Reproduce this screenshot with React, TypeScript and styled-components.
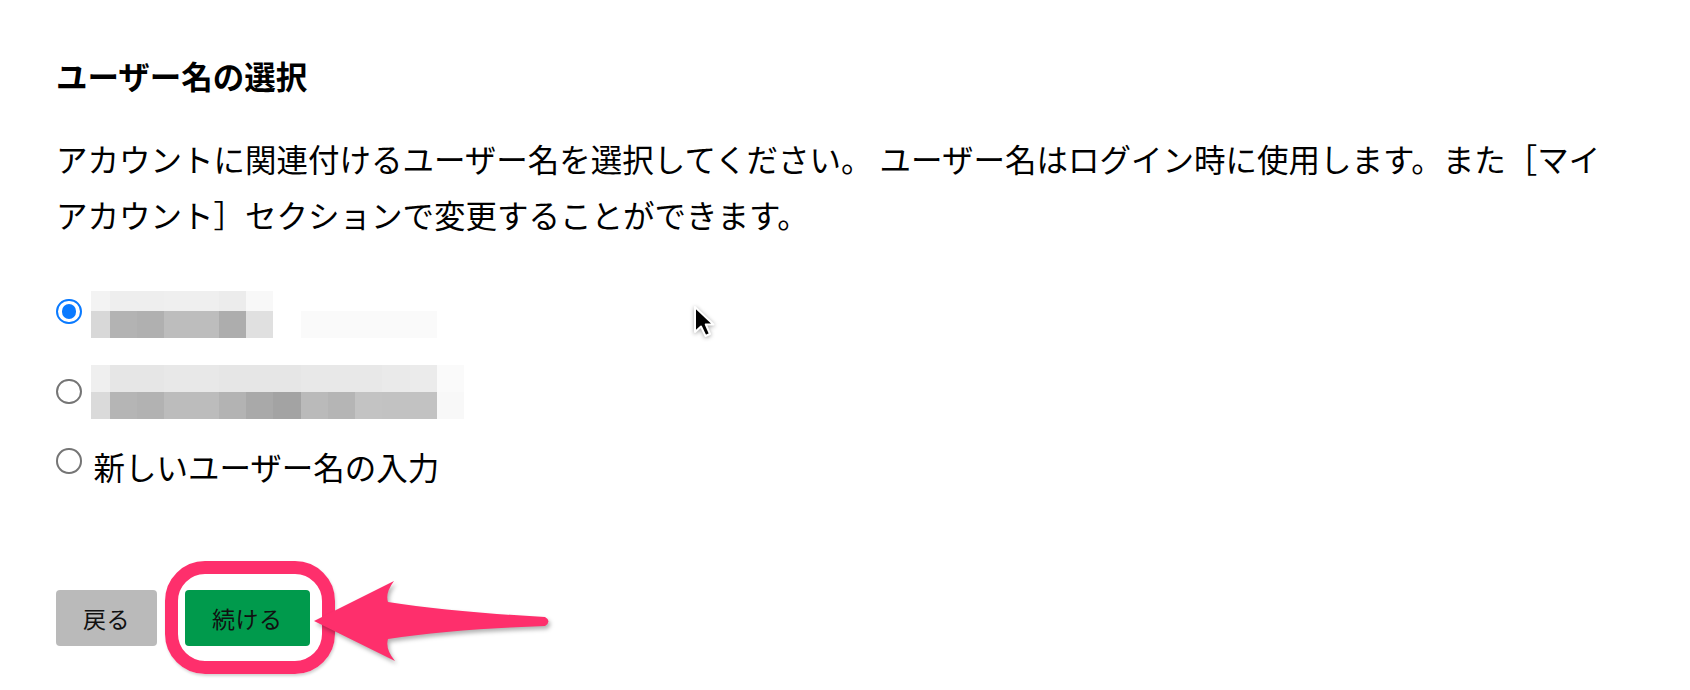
import { FC } from 'react';
import styled, { createGlobalStyle } from 'styled-components';

const GlobalStyle = createGlobalStyle`
  html, body {
    margin: 0;
    background: #fff;
  }
  body {
    font-family: 'Noto Sans CJK JP', 'Noto Sans', sans-serif;
    color: #000;
  }
`;

const FIRST = 19;
const CELL = 27.3;

const mosaicA: string[][] = [
  ['#f3f3f3', '#eeeeee', '#eeeeee', '#efefef', '#efefef', '#ececec', '#f8f8f8'],
  ['#d8d8d8', '#b3b3b3', '#b0b0b0', '#bdbdbd', '#bdbdbd', '#adadad', '#e0e0e0', '#fff', '#fafafa', '#fafafa', '#fafafa', '#fafafa', '#fafafa'],
];

const mosaicB: string[][] = [
  ['#efefef', '#e6e6e6', '#e6e6e6', '#e8e8e8', '#e8e8e8', '#e6e6e6', '#e6e6e6', '#e6e6e6', '#e8e8e8', '#e8e8e8', '#e8e8e8', '#eaeaea', '#ebebeb', '#fafafa'],
  ['#dadada', '#b5b5b5', '#b2b2b2', '#bcbcbc', '#bcbcbc', '#b3b3b3', '#a9a9a9', '#a3a3a3', '#bababa', '#b5b5b5', '#c3c3c3', '#c2c2c2', '#c2c2c2', '#f8f8f8'],
];

interface IMosaicProps {
  rows: string[][]
  heights: number[]
}

const Mosaic: FC<IMosaicProps> = ({ rows, heights }) => (
  <MosaicBox>
    {rows.map((row, r) => (
      <MosaicRow key={r} $h={heights[r]}>
        {row.map((c, i) => (
          <Cell key={i} $c={c} $w={i === 0 ? FIRST : CELL} />
        ))}
      </MosaicRow>
    ))}
  </MosaicBox>
);

const App: FC = () => {
  return (
    <Page>
      <GlobalStyle />
      <Title>ユーザー名の選択</Title>
      <Description>
        アカウントに関連付けるユーザー名を選択してください。 ユーザー名はログイン時に使用します。また［マイアカウント］セクションで変更することができます。
      </Description>

      <Options>
        <Option>
          <Radio $checked $offset={7.5} />
          <Mosaic rows={mosaicA} heights={[20, 27]} />
        </Option>
        <Option>
          <Radio $offset={13.5} />
          <Mosaic rows={mosaicB} heights={[27, 27]} />
        </Option>
        <Option>
          <Radio $offset={2} />
          <Label>新しいユーザー名の入力</Label>
        </Option>
      </Options>

      <Actions>
        <Button $variant="back">戻る</Button>
        <Highlighted>
          <Button $variant="primary">続ける</Button>
          <Ring />
          <Arrow viewBox="0 0 260 100" width="260" height="100">
            <path
              d="M12 52 L92 12 Q83 24 86 33 Q150 43 243 48 Q250 52 243 57 Q150 60 86 70 Q83 80 93 92 Z"
              fill="#fe2f6c"
            />
          </Arrow>
        </Highlighted>
      </Actions>

      <Cursor viewBox="0 0 24 36" width="24" height="36">
        <path
          d="M2 2 L2 27 L8 21.5 L12.5 31 L17 29 L12.8 19.5 L20.5 19.5 Z"
          fill="#000"
          stroke="#fff"
          strokeWidth="2"
          strokeLinejoin="round"
        />
      </Cursor>
    </Page>
  );
}

export default App;

const Page = styled.div`
  position: relative;
  height: 690px;
  overflow: hidden;
  padding: 53px 0 0 56px;
  box-sizing: border-box;
`;

const Title = styled.h2`
  margin: 0;
  font-size: 31.5px;
  line-height: 44px;
  font-weight: 700;
`;

const Description = styled.p`
  margin: 33px 0 0;
  max-width: 1570px;
  font-size: 31.5px;
  line-height: 56px;
  font-weight: 400;
`;

const Options = styled.div`
  margin-top: 49px;
  display: flex;
  flex-direction: column;
  gap: 27px;
`;

const Option = styled.div`
  display: flex;
  align-items: flex-start;
  gap: 9px;
`;

const Radio = styled.span<{ $checked?: boolean; $offset: number }>`
  position: relative;
  flex: none;
  width: 25.5px;
  height: 25.5px;
  margin-top: ${p => p.$offset}px;
  border-radius: 50%;
  box-sizing: border-box;
  background: #fff;
  border: ${p => (p.$checked ? '2.6px solid #0a7aff' : '2.2px solid #757575')};

  &::after {
    content: '';
    display: ${p => (p.$checked ? 'block' : 'none')};
    position: absolute;
    left: 50%;
    top: 50%;
    width: 14.5px;
    height: 14.5px;
    margin: -7.25px 0 0 -7.25px;
    border-radius: 50%;
    background: #0a7aff;
  }
`;

const MosaicBox = styled.div`
  display: flex;
  flex-direction: column;
`;

const MosaicRow = styled.div<{ $h: number }>`
  display: flex;
  height: ${p => p.$h}px;
`;

const Cell = styled.span<{ $c: string; $w: number }>`
  flex: none;
  width: ${p => p.$w}px;
  background: ${p => p.$c};
`;

const Label = styled.span`
  margin-left: 3px;
  font-size: 31.5px;
  line-height: 40px;
`;

const Actions = styled.div`
  margin-top: 104px;
  display: flex;
  gap: 28px;
`;

const Button = styled.button<{ $variant: 'back' | 'primary' }>`
  height: 56px;
  padding: 0 27px;
  border: none;
  border-radius: 4px;
  background: ${p => (p.$variant === 'primary' ? '#009a4c' : '#bababa')};
  color: #111;
  font-family: 'Noto Sans CJK JP', sans-serif;
  font-size: 23px;
  letter-spacing: 0.5px;
  cursor: pointer;
`;

const Highlighted = styled.div`
  position: relative;
`;

const Ring = styled.div`
  position: absolute;
  left: -20px;
  top: -29px;
  width: 170px;
  height: 113px;
  box-sizing: border-box;
  border: 13px solid #fe2f6c;
  border-radius: 40px;
  box-shadow: 1px 2px 3px rgba(0, 0, 0, 0.18);
  pointer-events: none;
`;

const Arrow = styled.svg`
  position: absolute;
  left: 117px;
  top: -21px;
  overflow: visible;
  filter: drop-shadow(2px 3px 2px rgba(0, 0, 0, 0.3));
  pointer-events: none;
`;

const Cursor = styled.svg`
  position: absolute;
  left: 693px;
  top: 305px;
  overflow: visible;
  filter: drop-shadow(0 1px 2px rgba(0, 0, 0, 0.35));
`;
